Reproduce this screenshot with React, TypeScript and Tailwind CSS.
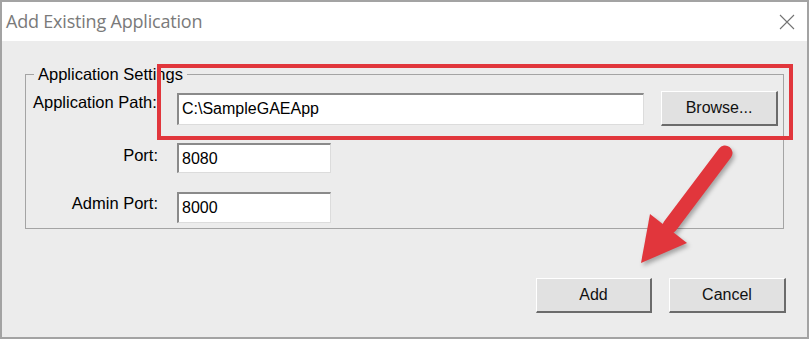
import React from 'react';

const sunken =
  'bg-white border-t-2 border-l-2 border-r border-b border-t-[#8a8a8a] border-l-[#8a8a8a] border-r-[#dcdcdc] border-b-[#dcdcdc] flex items-center pl-[3px] text-[16px] text-black';

const raised =
  'bg-[#e1e1e1] border-t border-l border-r-2 border-b-2 border-t-white border-l-white border-r-[#6b6b6b] border-b-[#6b6b6b] flex items-center justify-center text-[16px] text-[#111]';

const Field = ({ value, width }: { value: string; width: string }) => (
  <div className={`${sunken} ${width}`}>{value}</div>
);

const App = () => {
  return (
    <div className="relative w-[809px] h-[339px] border-2 border-[#a3a3a3] bg-[#ececec] flex flex-col font-['Liberation_Sans',Arial,sans-serif] overflow-hidden">
      {/* Title bar */}
      <div className="h-[39px] bg-white flex items-center justify-between pl-[4px] pr-[12px] shrink-0">
        <span className="font-['Open_Sans',sans-serif] text-[18px] text-[#7a7a7a] tracking-[-0.2px]">
          Add Existing Application
        </span>
        <svg width="16" height="16" viewBox="0 0 16 16" className="mt-[1px]">
          <path d="M1 1 L15 15 M15 1 L1 15" stroke="#737373" strokeWidth="1.1" fill="none" />
        </svg>
      </div>

      {/* Body */}
      <div className="flex-1 flex flex-col">
        <fieldset className="mt-[23px] ml-[23px] mr-[23px] border border-[#a4a4a4] pb-[5px] text-[16.5px] text-black">
          <legend className="ml-[8px] px-[4px] leading-[20px]">Application Settings</legend>

          <div className="flex items-start mt-[7px] h-[35px]">
            <span className="w-[132px] pl-[7px] text-left leading-[18px] mt-[2px] whitespace-nowrap">Application Path:</span>
            <div className="ml-[19px] h-[35px] flex items-center">
              <Field value="C:\SampleGAEApp" width="w-[467px] h-[32px]" />
            </div>
            <button className={`${raised} ml-[17px] w-[117px] h-[35px]`}>Browse...</button>
          </div>

          <div className="flex items-start mt-[17px]">
            <span className="w-[132px] text-right leading-[18px] mt-[3px]">Port:</span>
            <div className="ml-[19px]">
              <Field value="8080" width="w-[154px] h-[30px]" />
            </div>
          </div>

          <div className="flex items-start mt-[19px]">
            <span className="w-[132px] text-right leading-[18px] mt-[2px]">Admin Port:</span>
            <div className="ml-[19px]">
              <Field value="8000" width="w-[154px] h-[31px]" />
            </div>
          </div>
        </fieldset>

        <div className="flex justify-end gap-[17px] mt-[49px] pr-[21px]">
          <button className={`${raised} w-[116px] h-[35px]`}>Add</button>
          <button className={`${raised} w-[117px] h-[35px]`}>Cancel</button>
        </div>
      </div>

      {/* Annotation: red highlight box */}
      <div className="absolute left-[155px] top-[62px] w-[636px] h-[76px] border-[4px] border-[#e1363c] pointer-events-none" />

      {/* Annotation: arrow */}
      <svg
        className="absolute left-0 top-0 pointer-events-none drop-shadow-[2px_3px_2px_rgba(0,0,0,0.3)]"
        width="809"
        height="339"
        viewBox="2 2 809 339"
      >
        <line x1="725" y1="153" x2="670" y2="226" stroke="#e1363c" strokeWidth="15" strokeLinecap="round" />
        <polygon points="641,263 650,214 687,243" fill="#e1363c" />
      </svg>
    </div>
  );
};

export default App;
